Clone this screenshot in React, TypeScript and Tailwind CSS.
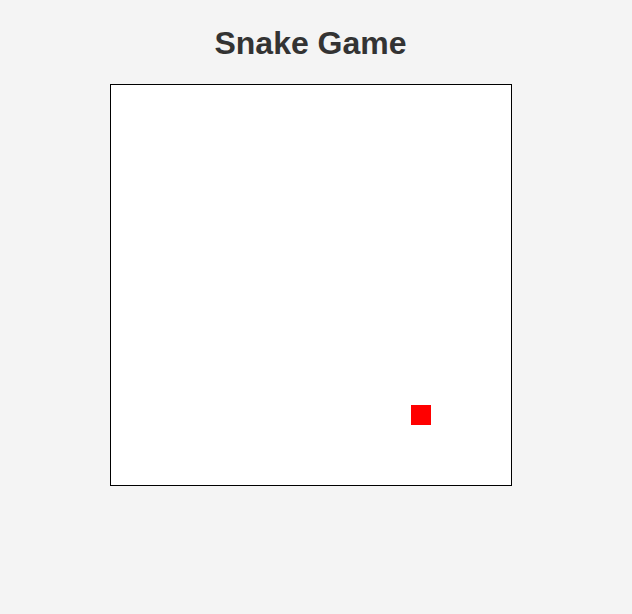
import React from 'react';

const CELL = 20;

export default function App() {
  // food position in grid cells
  const food = { x: 15, y: 16 };

  return (
    <div className="min-h-screen w-full bg-[#f4f4f4] pr-[11px] pt-[25px] flex flex-col items-center font-['Liberation_Sans',Arial,sans-serif]">
      <h1 className="text-[32px] leading-[37px] font-bold text-[#333]">Snake Game</h1>
      <div className="mt-[22px] w-[402px] h-[402px] border border-black bg-white relative">
        <div
          className="absolute w-[20px] h-[20px] bg-[#ff0000]"
          style={{ left: food.x * CELL, top: food.y * CELL }}
        />
      </div>
    </div>
  );
}
